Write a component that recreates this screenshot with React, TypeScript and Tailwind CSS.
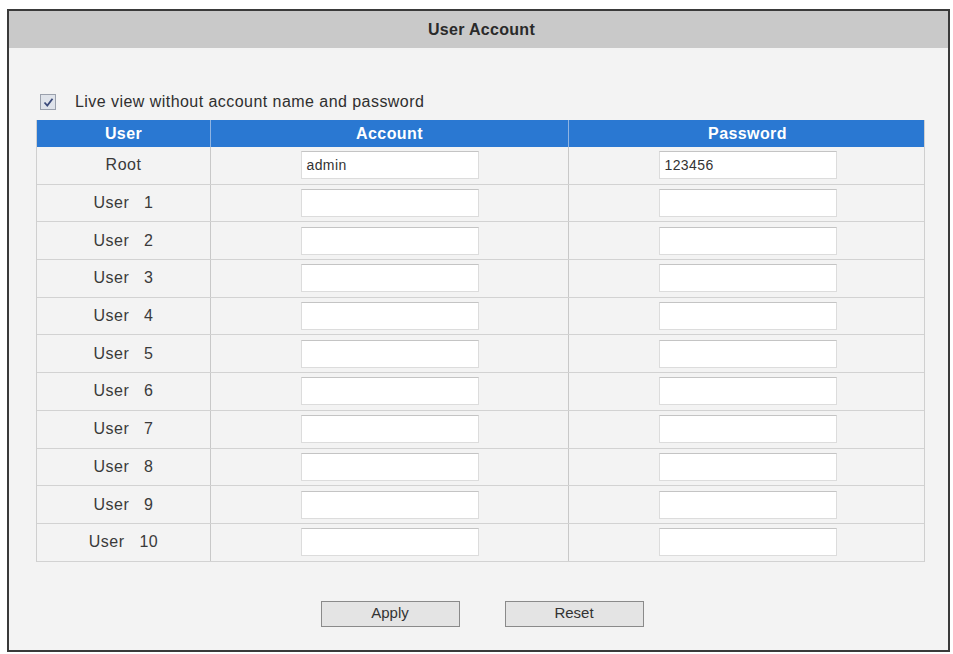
const users = ["User   1", "User   2", "User   3", "User   4", "User   5", "User   6", "User   7", "User   8", "User   9", "User   10"];

function Field({ value = "" }: { value?: string }) {
  return (
    <div className="w-[178px] h-[28px] bg-white border border-[#dcdcdc] border-t-[#c4c4c4] flex items-center px-[5px] text-[14px] tracking-[0.4px] text-[#333]">
      {value}
    </div>
  );
}

function Row({ name, account, password }: { name: string; account?: string; password?: string }) {
  return (
    <div className="grid grid-cols-[174px_358px_357px] h-[37.7px] border-b border-[#d2d2d2]">
      <div className="flex items-center justify-center whitespace-pre text-[16px] tracking-[0.5px] text-[#3a3a3a] border-r border-[#c8c8c8]">
        {name}
      </div>
      <div className="flex items-center justify-center border-r border-[#c8c8c8]">
        <Field value={account} />
      </div>
      <div className="flex items-center justify-center">
        <Field value={password} />
      </div>
    </div>
  );
}

export default function App() {
  return (
    <div className="w-[953px] h-[654px] bg-white pl-[7px] pt-[9px] font-['Liberation_Sans',Arial,sans-serif]">
      <div className="w-[943px] h-[643px] border-2 border-[#3a3a3a] bg-[#f3f3f3] flex flex-col">
        <div className="h-[37px] bg-[#c9c9c9] flex items-center justify-center pl-[6px] text-[16px] tracking-[0.3px] font-bold text-[#2a2a2a]">
          User Account
        </div>

        <div className="flex items-center mt-[45px] ml-[31px] h-[18px]">
          <div className="w-[16px] h-[16px] border border-[#9aa0ac] bg-[#dfe3ea] flex items-center justify-center">
            <svg width="11" height="11" viewBox="0 0 11 11">
              <path d="M1.5 5.5 L4.3 8.5 L9.5 1.8" fill="none" stroke="#3b4a7a" strokeWidth="1.8" />
            </svg>
          </div>
          <span className="ml-[19px] text-[16px] tracking-[0.45px] text-[#2f2f2f]">Live view without account name and password</span>
        </div>

        <div className="ml-[27px] mt-[9px] w-[889px] border-l border-r border-[#cfcfcf]">
          <div className="grid grid-cols-[174px_358px_357px] h-[27px] bg-[#2a78d2] text-white text-[16px] tracking-[0.4px] font-bold">
            <div className="flex items-center justify-center border-r border-[#8fb4e2]">User</div>
            <div className="flex items-center justify-center border-r border-[#8fb4e2]">Account</div>
            <div className="flex items-center justify-center">Password</div>
          </div>
          <Row name="Root" account="admin" password="123456" />
          {users.map((u) => (
            <Row key={u} name={u} />
          ))}
        </div>

        <div className="flex justify-center gap-[45px] mt-[39px] pl-[7px]">
          <button className="w-[139px] h-[26px] bg-[#e4e4e4] border border-[#8a8a8a] text-[15px] text-[#333]">
            Apply
          </button>
          <button className="w-[139px] h-[26px] bg-[#e4e4e4] border border-[#8a8a8a] text-[15px] text-[#333]">
            Reset
          </button>
        </div>
      </div>
    </div>
  );
}
